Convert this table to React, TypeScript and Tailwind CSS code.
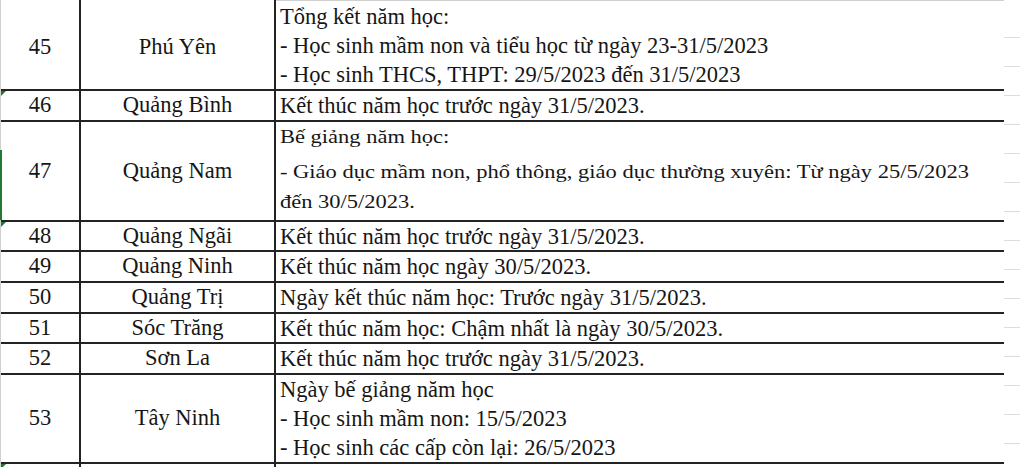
import * as React from 'react';

type Row = {
  no: string;
  name: string;
  lines: string[];
  h: string;
  pad?: string;
  flag?: boolean;
  tight?: boolean;
};

const serif = "font-['Liberation_Serif','Times_New_Roman',serif]";

// Bảng lịch kết thúc năm học (phần cắt từ Excel)
const rows: Row[] = [
  {
    no: '45',
    name: 'Phú Yên',
    h: 'h-[91px]',
    pad: 'pt-[5px]',
    lines: [
      'Tổng kết năm học:',
      '- Học sinh mầm non và tiểu học từ ngày 23-31/5/2023',
      '- Học sinh THCS, THPT: 29/5/2023 đến 31/5/2023',
    ],
  },
  { no: '46', name: 'Quảng Bình', h: 'h-[31px]', flag: true, lines: ['Kết thúc năm học trước ngày 31/5/2023.'] },
  {
    no: '47',
    name: 'Quảng Nam',
    h: 'h-[100px]',
    tight: true,
    lines: [
      'Bế giảng năm học:',
      '- Giáo dục mầm non, phổ thông, giáo dục thường xuyên: Từ ngày 25/5/2023',
      'đến 30/5/2023.',
    ],
  },
  { no: '48', name: 'Quảng Ngãi', h: 'h-[30px]', flag: true, lines: ['Kết thúc năm học trước ngày 31/5/2023.'] },
  { no: '49', name: 'Quảng Ninh', h: 'h-[31px]', lines: ['Kết thúc năm học ngày 30/5/2023.'] },
  { no: '50', name: 'Quảng Trị', h: 'h-[31px]', lines: ['Ngày kết thúc năm học: Trước ngày 31/5/2023.'] },
  { no: '51', name: 'Sóc Trăng', h: 'h-[30px]', lines: ['Kết thúc năm học: Chậm nhất là ngày 30/5/2023.'] },
  { no: '52', name: 'Sơn La', h: 'h-[31px]', lines: ['Kết thúc năm học trước ngày 31/5/2023.'] },
  {
    no: '53',
    name: 'Tây Ninh',
    h: 'h-[89px]',
    lines: [
      'Ngày bế giảng năm học',
      '- Học sinh mầm non: 15/5/2023',
      '- Học sinh các cấp còn lại: 26/5/2023',
    ],
  },
  { no: '', name: '', h: 'h-[31px]', flag: true, lines: [] },
];

function Flag() {
  return (
    <span className="absolute left-0 top-0 h-0 w-0 border-r-[5px] border-t-[5px] border-r-transparent border-t-[#1e7b34]" />
  );
}

export default function App() {
  return (
    <div className="relative flex h-[467px] w-[1020px] overflow-hidden bg-white text-[#161616]">
      {/* vạch lưới bên trái */}
      <div className="w-px shrink-0 bg-[#d0d0d0]" />
      <span className="absolute left-0 top-[150px] h-[70px] w-[2px] bg-[#1e7b34]" />

      <div className="flex w-[1003px] shrink-0 flex-col">
        {rows.map((r, i) => (
          <div
            key={i}
            className={`grid shrink-0 grid-cols-[80px_195px_728px] border-b-2 border-[#232323] ${r.h}`}
          >
            <div className={`relative flex items-center justify-center border-r-2 border-[#232323] ${r.pad ?? ''}`}>
              {r.flag && <Flag />}
              <span className={`${serif} text-[22.5px] leading-none`}>{r.no}</span>
            </div>
            <div className={`flex items-center justify-center border-r-2 border-[#232323] ${r.pad ?? ''}`}>
              <span className={`${serif} text-[22.5px] leading-none`}>{r.name}</span>
            </div>
            <div
              className={
                r.tight
                  ? 'flex flex-col justify-start pl-[4px]'
                  : 'flex flex-col justify-center pl-[4px]' + (i === 0 ? ' border-t border-[#d0d0d0]' : '')
              }
            >
              {r.lines.map((l, j) => (
                <div
                  key={j}
                  className={
                    r.tight
                      ? `${serif} origin-center scale-y-[0.87] whitespace-nowrap text-[22.5px] leading-[30px]` +
                        (j === 1 ? ' mt-[5px]' : '')
                      : `${serif} whitespace-nowrap text-[22.5px] leading-[29px]`
                  }
                >
                  {l}
                </div>
              ))}
            </div>
          </div>
        ))}
      </div>

      {/* lưới mờ của cột bên cạnh */}
      <div className="flex flex-1 flex-col pt-[9px]">
        {Array.from({ length: 16 }).map((_, k) => (
          <div key={k} className="h-[29px] shrink-0 border-b border-[#dcdcdc]" />
        ))}
      </div>
    </div>
  );
}
